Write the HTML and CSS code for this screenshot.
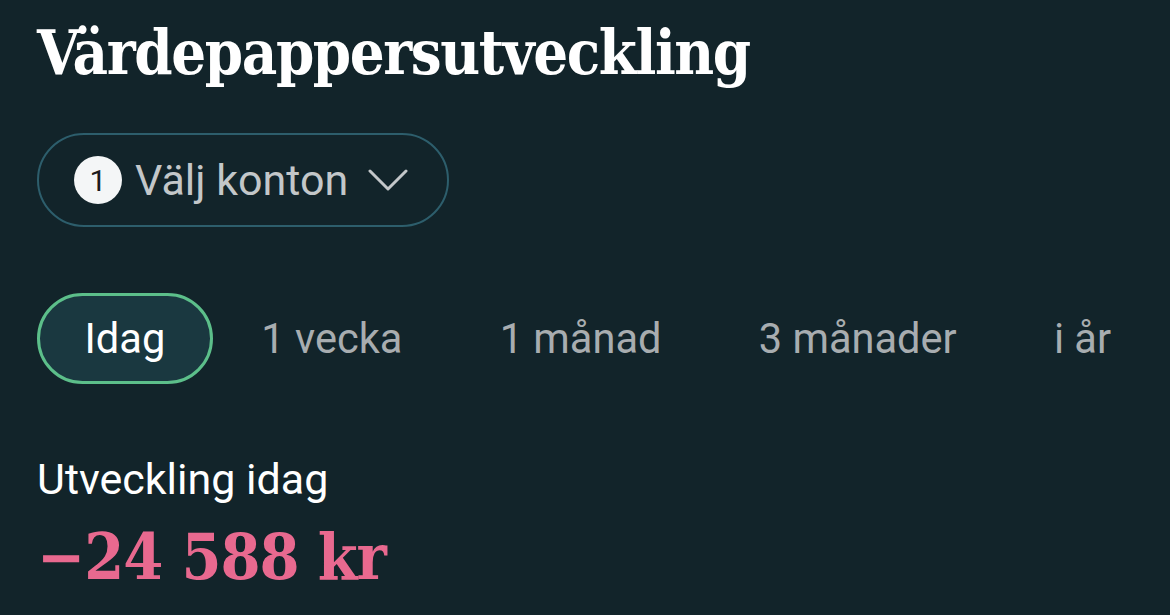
FILE: index.html
```html
<!DOCTYPE html>
<html>
<head>
    <title>Värdepappersutveckling</title>
    <link rel="stylesheet" href="styles.css">
</head>
<body>
    <div class="container">
        <h1>Värdepappersutveckling</h1>

        <button class="account-select" type="button">
            <span class="count">1</span>
            <span class="account-label">Välj konton</span>
            <svg class="chevron" width="40" height="24" viewBox="0 0 40 24">
                <path d="M2 3 L20 21 L38 3" fill="none" stroke="#c3c7c9" stroke-width="3" stroke-linecap="round" stroke-linejoin="round"/>
            </svg>
        </button>

        <div class="periods">
            <span class="period active">Idag</span>
            <span class="period">1 vecka</span>
            <span class="period">1 månad</span>
            <span class="period">3 månader</span>
            <span class="period">i år</span>
        </div>

        <div class="result">
            <div class="result-label">Utveckling idag</div>
            <div class="result-value">−24 588 kr</div>
        </div>
    </div>
</body>
</html>
```

FILE: styles.css
```css
body {
    margin: 0;
    background-color: #12242a;
    font-family: Roboto, "Noto Sans", sans-serif;
    overflow: hidden;
}

.container {
    padding: 0 37px;
}

h1 {
    margin: 0;
    padding-top: 18px;
    font-family: "DejaVu Serif", serif;
    font-stretch: condensed;
    font-weight: bold;
    font-size: 61px;
    letter-spacing: -1.4px;
    line-height: 70px;
    color: #ffffff;
}

.account-select {
    display: flex;
    align-items: center;
    margin-top: 45px;
    height: 94px;
    padding: 0 39px 0 35px;
    background: transparent;
    border: 2px solid #2d5e6c;
    border-radius: 47px;
    font-family: inherit;
    cursor: pointer;
}

.count {
    display: flex;
    align-items: center;
    justify-content: center;
    width: 48px;
    height: 48px;
    border-radius: 50%;
    background-color: #f4f6f7;
    color: #1b1b1b;
    font-size: 30px;
}

.account-label {
    margin-left: 13px;
    font-size: 43px;
    color: #c3c7c9;
}

.chevron {
    margin-left: 20px;
}

.periods {
    display: flex;
    margin-top: 66px;
}

.period {
    display: flex;
    align-items: center;
    height: 91px;
    padding: 0 48.6px;
    box-sizing: border-box;
    border-radius: 46px;
    font-size: 41.6px;
    color: #a8adb0;
    white-space: nowrap;
}

.period.active {
    border: 3px solid #5cbf8a;
    background-color: #1a3840;
    color: #ffffff;
    padding: 0 44.5px;
}

.result {
    margin-top: 70px;
}

.result-label {
    font-size: 43px;
    line-height: 50px;
    color: #ffffff;
}

.result-value {
    margin-top: 17px;
    font-family: "DejaVu Serif", serif;
    font-stretch: condensed;
    font-weight: bold;
    font-size: 64px;
    letter-spacing: -1px;
    line-height: 72px;
    color: #e8698f;
}
```
